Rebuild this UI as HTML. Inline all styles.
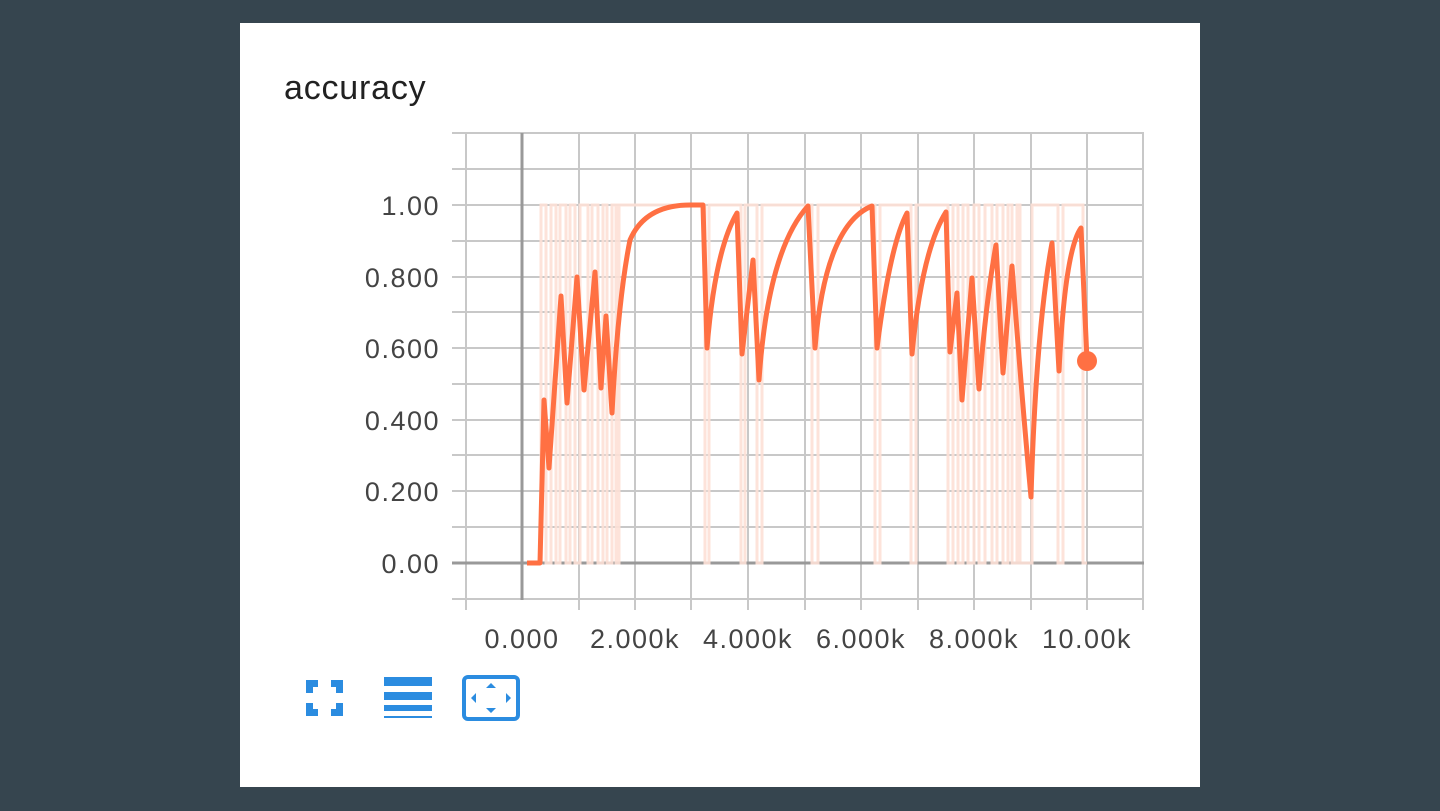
<!DOCTYPE html>
<html><head><meta charset="utf-8"><style>
html,body{margin:0;padding:0;width:1440px;height:811px;background:#36454f;overflow:hidden}
.p{position:absolute;left:240px;top:23px;width:960px;height:764px;background:#fff}
svg{position:absolute;left:0;top:0}
text{font-family:"Liberation Sans",sans-serif}
</style></head><body>
<div class="p"></div>
<svg width="1440" height="811" viewBox="0 0 1440 811">
<text x="284" y="99" font-size="34" letter-spacing="0.8" fill="#212121">accuracy</text>
<g stroke="#c8c8c8" stroke-width="2">
<line x1="452" y1="133" x2="1144" y2="133"/><line x1="452" y1="169" x2="1144" y2="169"/>
<line x1="452" y1="205" x2="1144" y2="205"/><line x1="452" y1="241" x2="1144" y2="241"/>
<line x1="452" y1="277" x2="1144" y2="277"/><line x1="452" y1="312" x2="1144" y2="312"/>
<line x1="452" y1="348" x2="1144" y2="348"/><line x1="452" y1="384" x2="1144" y2="384"/>
<line x1="452" y1="420" x2="1144" y2="420"/><line x1="452" y1="455" x2="1144" y2="455"/>
<line x1="452" y1="491" x2="1144" y2="491"/><line x1="452" y1="527" x2="1144" y2="527"/>
<line x1="452" y1="599" x2="1144" y2="599"/>
<line x1="466" y1="133" x2="466" y2="610"/><line x1="579" y1="133" x2="579" y2="610"/>
<line x1="635" y1="133" x2="635" y2="610"/><line x1="691" y1="133" x2="691" y2="610"/>
<line x1="748" y1="133" x2="748" y2="610"/><line x1="805" y1="133" x2="805" y2="610"/>
<line x1="861" y1="133" x2="861" y2="610"/><line x1="918" y1="133" x2="918" y2="610"/>
<line x1="974" y1="133" x2="974" y2="610"/><line x1="1031" y1="133" x2="1031" y2="610"/>
<line x1="1087" y1="133" x2="1087" y2="610"/><line x1="1143" y1="133" x2="1143" y2="610"/>
</g>
<g stroke="#999" stroke-width="3"><line x1="522" y1="133" x2="522" y2="600"/><line x1="452" y1="563" x2="1144" y2="563"/></g>
<g fill="#444" font-size="27" letter-spacing="1.5" text-anchor="end">
<text x="440" y="215">1.00</text><text x="440" y="287">0.800</text><text x="440" y="358">0.600</text>
<text x="440" y="430">0.400</text><text x="440" y="501">0.200</text><text x="440" y="573">0.00</text>
</g>
<g fill="#444" font-size="27" letter-spacing="1.5" text-anchor="middle">
<text x="522" y="648">0.000</text><text x="635" y="648">2.000k</text><text x="748" y="648">4.000k</text>
<text x="861" y="648">6.000k</text><text x="974" y="648">8.000k</text><text x="1087" y="648">10.00k</text>
</g>
<polyline fill="none" stroke="#fde0d6" stroke-width="3" opacity="0.9" points="527,563 541,563 541,205 546,205 546,563 551,563 551,205 556,205 556,563 560,563 560,205 566,205 566,563 570,563 570,205 575,205 575,563 580,563 580,205 588,205 588,563 592,563 592,205 598,205 598,563 603,563 603,205 607,205 607,563 612,563 612,205 616,205 616,563 619,563 619,205 705,205 705,563 709,563 709,205 741,205 741,563 745,563 745,205 757,205 757,563 762,563 762,205 812,205 812,563 818,563 818,205 875,205 875,563 880,563 880,205 911,205 911,563 916,563 916,205 948,205 948,563 953,563 953,205 958,205 958,563 963,563 963,205 968,205 968,563 974,563 974,205 979,205 979,563 985,563 985,205 992,205 992,563 997,563 997,205 1003,205 1003,563 1008,563 1008,205 1012,205 1012,563 1017,563 1017,205 1020,205 1020,563 1032,563 1032,205 1058,205 1058,563 1063,563 1063,205 1083,205 1083,563 1087,563"/>
<path fill="none" stroke="#ff7043" stroke-width="5" stroke-linejoin="round" d="M527,563 L540,563 L544,400 L549,468 L561,296 L567,403 L577,277 L584,390 L595,272 L601,388 L606,316 L612,413 Q618,300 630,240 Q645,205 690,205 L703,205 L707,348 Q715,250 737,213 L742,354 L753,260 L759,380 Q768,250 808,206 L815,348 Q825,225 872,206 L877,348 Q890,245 907,213 L912,354 Q922,250 946,212 L950,352 L957,293 L962,400 L972,278 L979,389 Q986,300 996,245 L1003,373 L1012,266 Q1022,400 1031,497 Q1036,330 1052,243 L1059,371 Q1065,250 1081,228 L1087,360"/>
<circle cx="1087" cy="361" r="10" fill="#ff7043"/>
<g fill="#2b8ce0">
<path d="M306,680h12v7h-5v6h-7z M343,680h-12v7h5v6h7z M306,716h12v-7h-5v-6h-7z M343,716h-12v-7h5v-6h7z"/>
<rect x="384" y="677" width="48" height="9"/><rect x="384" y="692" width="48" height="8"/>
<rect x="384" y="705" width="48" height="6"/><rect x="384" y="716" width="48" height="2"/>
</g>
<rect x="464" y="677" width="54" height="42" rx="4" fill="none" stroke="#2b8ce0" stroke-width="4"/>
<g fill="#2b8ce0"><path d="M491,683l5,5h-10z M491,713l5,-5h-10z M471,698l5,-5v10z M511,698l-5,-5v10z"/></g>
</svg>
</body></html>
